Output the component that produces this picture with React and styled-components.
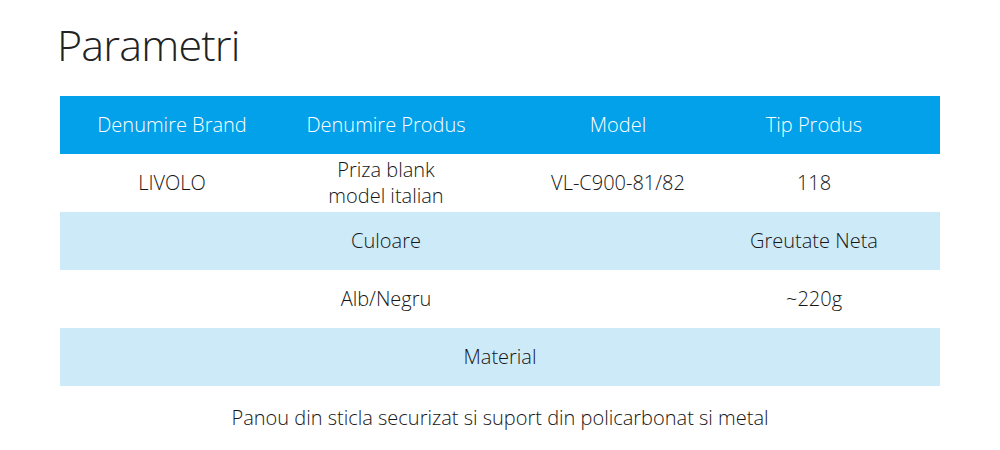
import React from "react";
import styled, { createGlobalStyle } from "styled-components";

const Global = createGlobalStyle`
  html, body { margin: 0; padding: 0; background: #fff; }
  body { font-family: "Open Sans", "Liberation Sans", sans-serif; color: #222; }
`;

const Page = styled.div`
  width: 1000px;
  height: 450px;
  padding: 23px 60px 0 60px;
  box-sizing: border-box;
  overflow: hidden;
`;

const Title = styled.h1`
  margin: 0 0 29px -3px;
  font-weight: 300;
  font-size: 43px;
  line-height: 44px;
  color: #222;
  letter-spacing: -0.8px;
`;

const Table = styled.table`
  width: 880px;
  border-collapse: collapse;
  table-layout: fixed;
`;

const Row = styled.tr`
  height: ${(p) => p.$h || 58}px;
  background: ${(p) =>
    p.$tone === "head" ? "#03a1e9" : p.$tone === "light" ? "#cdeaf9" : "#ffffff"};
  color: ${(p) => (p.$tone === "head" ? "#ffffff" : "#161616")};
`;

const Cell = styled.td`
  padding: 0;
  text-align: center;
  vertical-align: middle;
  font-size: 20px;
  font-weight: 300;
  line-height: 26px;
  white-space: nowrap;
`;

export default function App() {
  return (
    <>
      <Global />
      <Page>
        <Title>Parametri</Title>
        <Table>
          <colgroup>
            <col style={{ width: 224 }} />
            <col style={{ width: 204 }} />
            <col style={{ width: 260 }} />
            <col style={{ width: 132 }} />
            <col style={{ width: 60 }} />
          </colgroup>
          <tbody>
            <Row $tone="head">
              <Cell>Denumire Brand</Cell>
              <Cell>Denumire Produs</Cell>
              <Cell>Model</Cell>
              <Cell>Tip Produs</Cell>
              <Cell />
            </Row>
            <Row>
              <Cell>LIVOLO</Cell>
              <Cell>
                Priza blank
                <br />
                model italian
              </Cell>
              <Cell>VL-C900-81/82</Cell>
              <Cell>118</Cell>
              <Cell />
            </Row>
            <Row $tone="light">
              <Cell />
              <Cell>Culoare</Cell>
              <Cell />
              <Cell>Greutate Neta</Cell>
              <Cell />
            </Row>
            <Row>
              <Cell />
              <Cell>Alb/Negru</Cell>
              <Cell />
              <Cell>~220g</Cell>
              <Cell />
            </Row>
            <Row $tone="light">
              <Cell colSpan={5}>Material</Cell>
            </Row>
            <Row $h={64}>
              <Cell colSpan={5}>
                Panou din sticla securizat si suport din policarbonat si metal
              </Cell>
            </Row>
          </tbody>
        </Table>
      </Page>
    </>
  );
}
